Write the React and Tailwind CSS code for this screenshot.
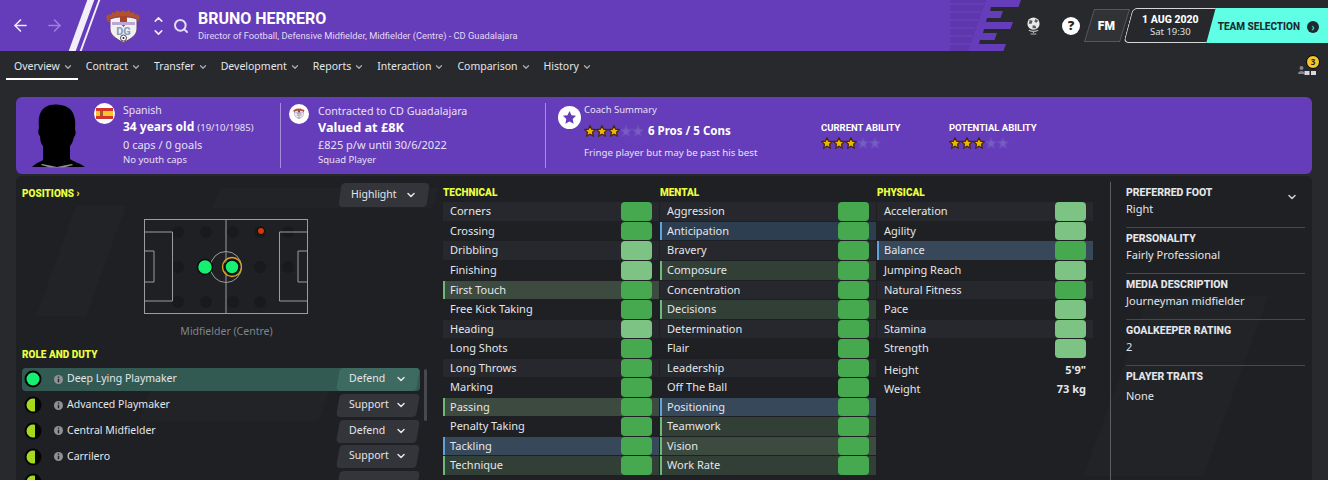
import { ArrowLeft, ArrowRight, ChevronDown, ChevronUp, Search } from 'lucide-react';

const technical = [
  ['Corners', 'd'], ['Crossing', 'd'], ['Dribbling', 'l'], ['Finishing', 'l'], ['First Touch', 'd', 'g'],
  ['Free Kick Taking', 'd'], ['Heading', 'l'], ['Long Shots', 'd'], ['Long Throws', 'd'], ['Marking', 'd'],
  ['Passing', 'd', 'g'], ['Penalty Taking', 'd'], ['Tackling', 'd', 'b'], ['Technique', 'd', 'g'],
];
const mental = [
  ['Aggression', 'd'], ['Anticipation', 'd', 'b'], ['Bravery', 'd'], ['Composure', 'd', 'g'], ['Concentration', 'd'],
  ['Decisions', 'd', 'g'], ['Determination', 'd'], ['Flair', 'd'], ['Leadership', 'd'], ['Off The Ball', 'd'],
  ['Positioning', 'd', 'b'], ['Teamwork', 'd', 'g'], ['Vision', 'd', 'g'], ['Work Rate', 'd', 'g'],
];
const physical = [
  ['Acceleration', 'l'], ['Agility', 'l'], ['Balance', 'd', 'b'], ['Jumping Reach', 'l'],
  ['Natural Fitness', 'd'], ['Pace', 'l'], ['Stamina', 'l'], ['Strength', 'l'],
];
const tabs = ['Overview', 'Contract', 'Transfer', 'Development', 'Reports', 'Interaction', 'Comparison', 'History'];
const roles = [
  ['Deep Lying Playmaker', 'Defend', true],
  ['Advanced Playmaker', 'Support'],
  ['Central Midfielder', 'Defend'],
  ['Carrilero', 'Support'],
  ['', ''], // cut off by the bottom of the window
];
const facts = [
  ['PREFERRED FOOT', 'Right'],
  ['PERSONALITY', 'Fairly Professional'],
  ['MEDIA DESCRIPTION', 'Journeyman midfielder'],
  ['GOALKEEPER RATING', '2'],
];

function rowColour(i, hl) {
  const light = i % 2 === 0;
  if (hl === 'g') return light ? 'bg-[#3c4a3f] border-l-[#6fb877]' : 'bg-[#323f36] border-l-[#6fb877]';
  if (hl === 'b') return light ? 'bg-[#36485a] border-l-[#5fa3dc]' : 'bg-[#2c3e50] border-l-[#5fa3dc]';
  return light ? 'bg-[#26282d] border-l-transparent' : 'border-l-transparent';
}

function Star({ on, size = 12 }) {
  return (
    <svg width={size} height={size} viewBox="0 0 24 24">
      <path
        d="M12 1.500l3.200 6.900 7.300.9-5.400 5.100 1.500 7.600-6.600-3.800-6.600 3.800 1.500-7.600-5.400-5.100 7.300-.9z"
        fill={on ? '#f5b400' : '#7a5cc4'}
        stroke={on ? '#3d2a10' : '#6a4bbd'}
        strokeWidth="2.500"
      />
    </svg>
  );
}

function Stars({ n = 3 }) {
  return (
    <div className="flex">
      {[0, 1, 2, 3, 4].map((i) => (
        <Star key={i} on={i < n} />
      ))}
    </div>
  );
}

function Crest({ size = 37 }) {
  return (
    <svg width={size} height={size * 0.92} viewBox="0 0 37 34">
      <path d="M1 8l3-3 2 1 1-3 3 1 2-3 3 2 3-2 3 2 3-2 2 3 3-1 1 3 2-1 3 3-2 5H3z" fill="#b2522d" />
      <path d="M5 10c8-3 19-3 27 0v10c0 6-6 10-13.500 13.500C11 30 5 26 5 20z" fill="#f3f0f2" stroke="#6b3a78" strokeWidth="1" />
      <path d="M15 7h7v7l-3.500 4-3.500-4z" fill="#a8432e" />
      <path d="M7 13h23v3H7z" fill="#b9a9d2" />
      <text x="18.500" y="26" textAnchor="middle" fontSize="11" fontWeight="800" fontFamily="Roboto, sans-serif" fill="#8c9dbd">DG</text>
      <circle cx="18.500" cy="29" r="3" fill="#fff" stroke="#222" strokeWidth="0.8" />
      <circle cx="18.500" cy="29" r="1" fill="#222" />
    </svg>
  );
}

function Silhouette() {
  return (
    <svg width="56" height="64" viewBox="0 0 56 64">
      <path
        d="M2 63C6 59 10 58 13 56V42C11 40 10 36 10 32 8 31 8 26 9 24 8 14 9 4 20 1 30-1 42 2 44 12 46 18 45 21 45 25 46 28 46 31 44 33 43 37 42 40 40 42V55C44 58 50 59 55 63Z"
        fill="#000"
      />
      <path d="M12 60l8 1.500 7 1.500 7-1.500 8-1.500 1 1-9 2.500H20l-9-2.500z" fill="#8d8d94" />
    </svg>
  );
}

function SectionTitle({ children }) {
  return <div className="font-['Roboto',sans-serif] text-[10px] leading-3 font-black text-[#e9ff3e]">{children}</div>;
}

function AttributeColumn({ title, rows, children }) {
  return (
    <div className="relative w-[217px]">
      <div className="h-[26.4px] pt-[11px]">
        <SectionTitle>{title}</SectionTitle>
      </div>
      {rows.map(([name, tone, hl], i) => (
        <div key={name} className={`mb-[1px] flex h-[18.54px] w-[216px] items-center justify-between border-l-2 pl-[5px] pr-[7px] ${rowColour(i, hl)}`}>
          <span className="text-[11px] text-[#e4e6ea]">{name}</span>
          <span className={`h-full w-[31px] rounded-[4px] ${tone === 'l' ? 'bg-[#7dc383]' : 'bg-[#47a94f]'}`} />
        </div>
      ))}
      {children}
    </div>
  );
}

function Pitch() {
  return (
    <svg width="166" height="97" viewBox="0 0 166 97" fill="none">
      <g fill="#191a1e">
        {[35, 63, 90, 117, 145].map((x) => (
          <circle key={x} cx={x} cy="14" r="6" />
        ))}
        {[35, 117, 145].map((x) => (
          <circle key={x} cx={x} cy="49" r="6" />
        ))}
        {[35, 63, 90, 117].map((x) => (
          <circle key={x} cx={x} cy="84" r="6" />
        ))}
      </g>
      <g stroke="#9b9ca0" strokeWidth="1">
        <rect x="1.500" y="1.500" width="163" height="94" />
        <path d="M83 1.500v94" />
        <path d="M1.500 14h28v69h-28M1.500 33h9.500v31h-9.500M164.500 14h-28v69h28M164.500 33h-9.500v31h9.500" />
        <circle cx="83" cy="49" r="15.500" />
      </g>
      <circle cx="62" cy="49" r="7.500" fill="#17ef72" stroke="#0b0c0d" strokeWidth="1.500" />
      <circle cx="89" cy="49" r="9.500" fill="none" stroke="#e0a51c" strokeWidth="1.300" />
      <circle cx="89" cy="49" r="7" fill="#17ef72" stroke="#0b0c0d" strokeWidth="1.500" />
      <circle cx="118" cy="13" r="3.600" fill="#d23a06" stroke="#0b0c0d" strokeWidth="1" />
    </svg>
  );
}

function RoleDot({ full }) {
  return (
    <svg width="18" height="18" viewBox="0 0 18 18">
      <circle cx="9" cy="9" r="8.500" fill="#050505" />
      {full ? <circle cx="9" cy="9" r="6.500" fill="#17ef72" /> : <path d="M11 2.820A6.500 6.500 0 1 0 11 15.180Z" fill="#a5d81e" />}
    </svg>
  );
}

function InfoDot() {
  return (
    <svg width="9" height="9" viewBox="0 0 9 9" className="shrink-0">
      <circle cx="4.500" cy="4.500" r="4.500" fill="#8f9195" />
      <path d="M4.500 1.500v1.200M4.500 3.800v3.500" stroke="#1e2024" strokeWidth="1.400" />
    </svg>
  );
}

function Globe() {
  return (
    <svg width="15" height="18" viewBox="0 0 16 19">
      <circle cx="8" cy="7" r="6.500" fill="#e8e8e8" />
      <path d="M4 3l3 1-1 3-3 0zM10 2l3 2-2 2-2-1zM7 9l3 0 1 3-4 0z" fill="#55575c" />
      <path d="M3 14c3 1.500 7 1.500 10 0M8 15v2M5 18h6" stroke="#b9b9b9" strokeWidth="1.200" fill="none" />
    </svg>
  );
}

function Bell() {
  return (
    <svg width="18" height="10" viewBox="0 0 18 10">
      <circle cx="3.500" cy="3" r="2" fill="#83858a" />
      <path d="M0 9c0-2 1.500-3 3.500-3s3 1 3 3z" fill="#83858a" />
      <path d="M6.500 6h5v4h-5zM13 6h5v4h-5z" fill="#d8d9dc" />
    </svg>
  );
}

export default function App() {
  return (
    <div className="relative h-[480px] w-[1328px] overflow-hidden bg-[#27292d] font-['Noto_Sans',sans-serif] text-[#e4e6ea]">
      {/* top bar */}
      <header className="relative flex h-[51px] items-center bg-[#653cb9]">
        <div className="absolute left-[950px] top-0 h-[51px] w-[378px] bg-[#27292d]" />
        <svg className="absolute left-[950px] top-0" width="72" height="51" viewBox="0 0 72 51">
          <path d="M0 0H71L68.500 7H41L40 11H53L50.500 18H37L36 22H63L60.500 29H34L33 33H47L44.500 40H30L29 44H56L53.500 51H0Z" fill="#653cb9" />
          <path d="M0 0H36L18 51H0Z" fill="#5e37ad" />
          <path d="M0 4H34M0 12H31M0 20H28M0 28H25M0 36H22M0 44H20" stroke="#653cb9" strokeWidth="2" />
        </svg>
        <div className="absolute left-[68px] top-0 h-[51px] w-[7px] translate-x-[10px] -skew-x-[20deg] bg-[#f2eefa]" />
        <div className="absolute left-[78px] top-0 h-[51px] w-[2px] translate-x-[11px] -skew-x-[20deg] bg-[#f2eefa]" />

        <ArrowLeft className="relative ml-[11px]" size={19} color="#efeaf8" strokeWidth={2} />
        <ArrowRight className="relative ml-[15px]" size={19} color="#9d7fdc" strokeWidth={2} />
        <div className="relative ml-[41px] mt-[2px]">
          <Crest />
        </div>
        <div className="relative ml-[10px] flex flex-col">
          <ChevronUp size={13} color="#efeaf8" strokeWidth={3} />
          <ChevronDown size={13} color="#efeaf8" strokeWidth={3} />
        </div>
        <Search className="relative ml-[8px]" size={16} color="#e4dcf5" strokeWidth={3} />
        <div className="relative ml-[9px]">
          <div className="font-['Roboto',sans-serif] text-[16px] leading-[18px] font-bold text-white">BRUNO HERRERO</div>
          <div className="mt-[2px] font-['Roboto',sans-serif] text-[9.3px] leading-3 text-[#e2d9f4]">Director of Football, Defensive Midfielder, Midfielder (Centre) - CD Guadalajara</div>
        </div>

        <div className="relative ml-auto flex h-[35px] items-center">
          <Globe />
          <div className="ml-[21px] flex h-[18px] w-[18px] items-center justify-center rounded-full bg-white text-[13px] font-black text-[#26282c]">?</div>
          <div className="ml-[9px] flex h-[33px] w-[36px] -skew-x-[17deg] items-center justify-center border border-[#55575c] bg-[#303236]">
            <span className="skew-x-[17deg] font-['Roboto',sans-serif] text-[12px] font-black text-white">FM</span>
          </div>
          <div className="relative ml-[3px] h-[35px] w-[200px]">
            <div className="absolute right-0 top-0 flex h-[35px] w-[132px] items-center justify-end gap-[7px] bg-[#5fffe6] pr-[9px] pt-[2px]">
              <span className="font-['Roboto',sans-serif] text-[10px] font-extrabold text-[#1c2a30]">TEAM SELECTION</span>
              <span className="flex h-[12px] w-[12px] items-center justify-center rounded-full bg-[#1c2a30] text-[10px] leading-none text-[#5fffe6]">›</span>
            </div>
            <div className="absolute left-0 top-0 flex h-[35px] w-[83px] -skew-x-[15deg] flex-col items-center justify-center rounded-[5px] rounded-r-none border border-r-0 border-[#d5d6d8] bg-[#26282c]">
              <div className="skew-x-[15deg] text-center">
                <div className="font-['Roboto',sans-serif] text-[10.5px] leading-[13px] font-extrabold text-white">1 AUG 2020</div>
                <div className="text-[9.5px] leading-[12px] text-[#dfe0e3]">Sat 19:30</div>
              </div>
            </div>
          </div>
        </div>
      </header>

      {/* tabs */}
      <nav className="relative flex h-[46px] pl-[6px] pt-[4px]">
        {tabs.map((tab, i) => (
          <div key={tab} className={`flex h-[25px] items-center gap-[3px] pl-[8px] pr-[5px] text-[10.5px] ${i === 0 ? 'border-b-2 border-white' : 'border-b-2 border-transparent'}`}>
            {tab}
            <ChevronDown size={10} color="#a9abb0" strokeWidth={3} />
          </div>
        ))}
        <div className="absolute right-[12px] top-[14px]">
          <Bell />
          <div className="absolute -right-[4px] -top-[10px] flex h-[14px] w-[14px] items-center justify-center rounded-full border border-black bg-[#f5c52e] text-[8px] font-bold text-[#222]">3</div>
        </div>
      </nav>

      {/* bio */}
      <section className="mx-[16px] flex h-[77px] rounded-[6px] bg-[#653cb9]">
        <div className="flex w-[264px] pl-[14px] pt-[7px]">
          <Silhouette />
          <div className="ml-[8px] mt-[-1px] flex h-[21px] w-[21px] items-center justify-center overflow-hidden rounded-full bg-white">
            <div className="flex h-[11px] w-[17px] items-center bg-[#d5342b]">
              <div className="h-[5px] w-full bg-[#f5c52e] pl-[4px]">
                <div className="h-full w-[3px] bg-[#a8562c]" />
              </div>
            </div>
          </div>
          <div className="ml-[8px] mt-[-1px]">
            <div className="text-[10.5px] leading-[15px] text-[#e8e0f6]">Spanish</div>
            <div className="text-[12px] leading-[17px] font-bold text-white">
              34 years old <span className="text-[9.5px] font-normal text-[#e8e0f6]">(19/10/1985)</span>
            </div>
            <div className="text-[11px] leading-[17px] text-[#e8e0f6]">0 caps / 0 goals</div>
            <div className="text-[9.5px] leading-[13px] text-[#e8e0f6]">No youth caps</div>
          </div>
        </div>
        <div className="mt-[6px] flex h-[65px] w-[265px] border-l border-[#a58ddc] pl-[8px] pt-[1px]">
          <div className="flex h-[20px] w-[20px] items-center justify-center rounded-full bg-white">
            <Crest size={12} />
          </div>
          <div className="ml-[9px]">
            <div className="text-[10.7px] leading-[15px] text-[#e8e0f6]">Contracted to CD Guadalajara</div>
            <div className="text-[12.7px] leading-[17px] font-bold text-white">Valued at £8K</div>
            <div className="text-[11px] leading-[17px] text-[#e8e0f6]">£825 p/w until 30/6/2022</div>
            <div className="text-[9.5px] leading-[13px] text-[#e8e0f6]">Squad Player</div>
          </div>
        </div>
        <div className="mt-[6px] flex h-[65px] border-l border-[#a58ddc] pl-[12px]">
          <div className="mt-[3px] flex h-[23px] w-[23px] items-center justify-center rounded-full bg-white">
            <svg width="15" height="15" viewBox="0 0 24 24">
              <path d="M12 1.500l3.200 6.900 7.300.9-5.400 5.100 1.500 7.600-6.600-3.800-6.600 3.800 1.500-7.600-5.400-5.100 7.300-.9z" fill="#653cb9" />
            </svg>
          </div>
          <div className="ml-[3px] w-[237px]">
            <div className="text-[9.5px] leading-[14px] text-[#e8e0f6]">Coach Summary</div>
            <div className="mt-[4px] flex h-[20px] items-center gap-[4px]">
              <Stars />
              <span className="text-[11.5px] font-bold text-white">6 Pros / 5 Cons</span>
            </div>
            <div className="mt-[5px] text-[9.7px] leading-[13px] text-[#e8e0f6]">Fringe player but may be past his best</div>
          </div>
          <div className="w-[128px] pt-[19px]">
            <div className="font-['Roboto',sans-serif] text-[9.5px] leading-3 font-bold text-white">CURRENT ABILITY</div>
            <div className="mt-[3px]">
              <Stars />
            </div>
          </div>
          <div className="w-[128px] pt-[19px]">
            <div className="font-['Roboto',sans-serif] text-[9.5px] leading-3 font-bold text-white">POTENTIAL ABILITY</div>
            <div className="mt-[3px]">
              <Stars />
            </div>
          </div>
        </div>
      </section>

      {/* main panel */}
      <main className="relative mx-[16px] mt-[2px] flex h-[310px] overflow-hidden rounded-t-[6px] bg-[#1e2024]">
        {/* faint diagonal backdrop */}
        <div className="absolute left-[40px] top-[30px] h-[110px] w-[50px] -skew-x-[20deg] bg-[#212327]" />
        <div className="absolute left-[200px] top-[12px] h-[20px] w-[220px] -skew-x-[20deg] bg-[#212327]" />
        <div className="absolute left-[130px] top-[205px] h-[40px] w-[180px] -skew-x-[20deg] bg-[#212327]" />
        <div className="absolute left-[1100px] top-[120px] h-[180px] w-[120px] -skew-x-[20deg] bg-[#212327]" />

        <div className="relative w-[427px] pl-[6px] pt-[2px]">
          <div className="flex h-[30px] items-start justify-between pr-[15px]">
            <div className="pt-[10px]">
              <SectionTitle>POSITIONS ›</SectionTitle>
            </div>
            <div className="mt-[5px] flex h-[24px] w-[88px] -skew-x-[8deg] items-center justify-center gap-[9px] rounded-[4px] bg-[#33353a]">
              <span className="skew-x-[8deg] text-[10.5px]">Highlight</span>
              <ChevronDown className="skew-x-[8deg]" size={12} strokeWidth={3} />
            </div>
          </div>
          <div className="ml-[121px] mt-[10px]">
            <Pitch />
          </div>
          <div className="mt-[9px] pr-[12px] text-center text-[10.5px] leading-[14px] text-[#7e858d]">Midfielder (Centre)</div>
          <div className="mt-[11px]">
            <SectionTitle>ROLE AND DUTY</SectionTitle>
          </div>
          <div className="relative mt-[7px] w-[398px]">
            {roles.map(([role, duty, active]) => (
              <div key={role} className={`mb-[3.3px] flex h-[22.5px] items-center rounded-[4px] pl-[2px] ${active ? 'bg-[#325a52]' : ''}`}>
                <RoleDot full={active} />
                {role && (
                  <span className="ml-[12px]">
                    <InfoDot />
                  </span>
                )}
                <span className="ml-[4px] text-[10.5px]">{role}</span>
                <div className={`ml-auto mr-[2px] flex h-[22.5px] w-[80px] -skew-x-[10deg] items-center justify-between rounded-[4px] pl-[11px] pr-[11px] ${active ? 'bg-[#3d6a61]' : 'bg-[#33353a]'}`}>
                  <span className="skew-x-[10deg] text-[10.5px]">{duty}</span>
                  {role && <ChevronDown className="skew-x-[10deg]" size={12} strokeWidth={3} />}
                </div>
              </div>
            ))}
            <div className="absolute -right-[7px] top-[1px] h-[52px] w-[3px] rounded-full bg-[#47494e]" />
          </div>
        </div>

        <AttributeColumn title="TECHNICAL" rows={technical} />
        <AttributeColumn title="MENTAL" rows={mental} />
        <AttributeColumn title="PHYSICAL" rows={physical}>
          <div className="flex h-[19.5px] items-center justify-between pl-[7px] pr-[8px] pt-[3px] text-[11px]">
            <span>Height</span>
            <span className="font-bold">5'9"</span>
          </div>
          <div className="flex h-[19.5px] items-center justify-between pl-[7px] pr-[8px] pt-[3px] text-[11px]">
            <span>Weight</span>
            <span className="font-bold">73 kg</span>
          </div>
        </AttributeColumn>

        <div className="relative ml-[16px] mt-[6px] h-[304px] w-[195px] border-l border-[#5c5e63] pl-[15px]">
          {facts.map(([label, value]) => (
            <div key={label} className="h-[46px] border-b border-[#47494e] pt-[5px]">
              <div className="font-['Roboto',sans-serif] text-[10.5px] leading-3 font-extrabold text-[#e4e6ea]">{label}</div>
              <div className="mt-[2px] text-[11px] leading-[16px]">{value}</div>
            </div>
          ))}
          <div className="pt-[5px]">
            <div className="font-['Roboto',sans-serif] text-[10.5px] leading-3 font-extrabold text-[#e4e6ea]">PLAYER TRAITS</div>
            <div className="mt-[5px] text-[11px] leading-[16px]">None</div>
          </div>
          <ChevronDown className="absolute right-[7px] top-[9px]" size={12} color="#d0d1d4" strokeWidth={3} />
        </div>
      </main>
    </div>
  );
}
